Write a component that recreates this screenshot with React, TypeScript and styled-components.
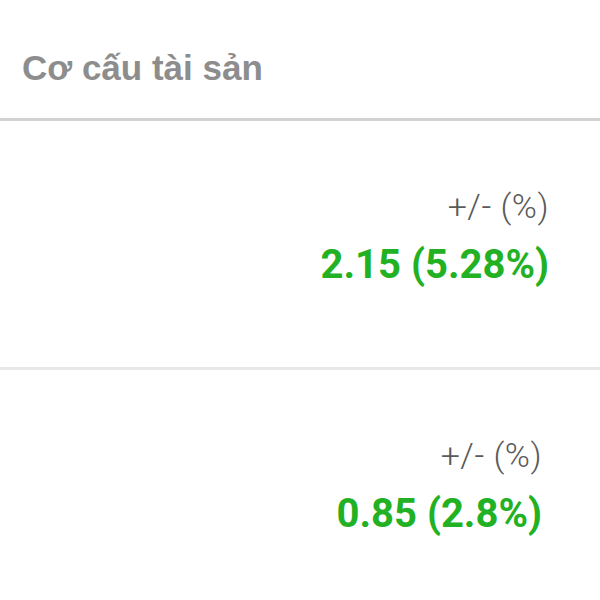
import React from "react";
import styled, { createGlobalStyle } from "styled-components";

const GlobalStyle = createGlobalStyle`
    html, body {
        margin: 0;
        padding: 0;
        background: #fff;
    }
    body {
        font-family: Roboto, "Liberation Sans", sans-serif;
    }
`;

type Change = {
    value: string;
    inset: number;
};

const rows: Change[] = [
    { value: "2.15 (5.28%)", inset: 51 },
    { value: "0.85 (2.8%)", inset: 58 },
];

export default function App(): React.ReactElement {
    return (
        <Page>
            <GlobalStyle />
            <Header>
                <Title>Cơ cấu tài sản</Title>
            </Header>
            {rows.map((row, i) => (
                <Row key={i} $inset={row.inset} $last={i === rows.length - 1}>
                    <Label>+/- (%)</Label>
                    <Value>{row.value}</Value>
                </Row>
            ))}
        </Page>
    );
}

const Page = styled.div`
    width: 600px;
    height: 600px;
    overflow: hidden;
    background: #fff;
`;
const Header = styled.div`
    height: 121px;
    box-sizing: border-box;
    padding: 48px 22px 0;
    border-bottom: 3px solid #d2d2d2;
`;
const Title = styled.h1`
    margin: 0;
    font-family: "Liberation Sans", Arial, sans-serif;
    font-size: 35px;
    line-height: 40px;
    font-weight: 700;
    color: #8d8d8d;
`;
const Row = styled.div<{ $inset: number; $last: boolean }>`
    height: 249px;
    box-sizing: border-box;
    padding: 66px ${(p) => p.$inset}px 0 0;
    display: flex;
    flex-direction: column;
    align-items: flex-end;
    gap: 16px;
    border-bottom: ${(p) => (p.$last ? "none" : "3px solid #e8e8e8")};
`;
const Label = styled.div`
    font-family: Roboto, sans-serif;
    font-size: 34px;
    line-height: 38px;
    font-weight: 300;
    letter-spacing: 0.5px;
    color: #5a5a5a;
`;
const Value = styled.div`
    font-family: Roboto, sans-serif;
    font-size: 40px;
    line-height: 48px;
    font-weight: 700;
    color: #22b123;
`;
